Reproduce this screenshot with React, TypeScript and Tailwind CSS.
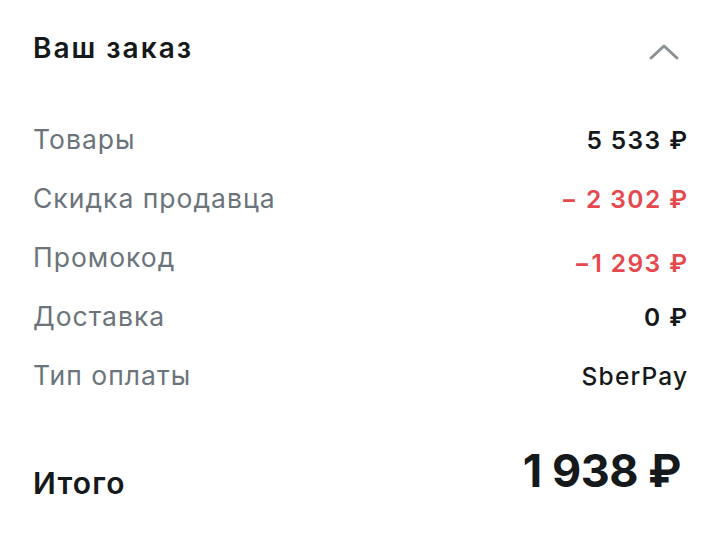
import React from "react";

const rows: { label: string; value: string; red?: boolean; shift?: boolean; medium?: boolean }[] = [
  { label: "Товары", value: "5 533 ₽" },
  { label: "Скидка продавца", value: "− 2 302 ₽", red: true },
  { label: "Промокод", value: "−1 293 ₽", red: true, shift: true },
  { label: "Доставка", value: "0 ₽" },
  { label: "Тип оплаты", value: "SberPay", medium: true },
];

export default function App() {
  return (
    <div
      className="w-[719px] h-[541px] bg-white pl-[33px] pr-[32px] pt-[28px] text-[#16191c]"
      style={{ fontFamily: "Inter, 'Noto Sans', sans-serif" }}
    >
      <div className="flex items-center justify-between h-[40px]">
        <div className="text-[28px] font-semibold tracking-[2px]">Ваш заказ</div>
        <svg width="32" height="18" viewBox="0 0 32 18" className="mr-[7px] mt-[8px]">
          <path d="M3 15 L16 3 L29 15" fill="none" stroke="#8a9298" strokeWidth="3" strokeLinecap="round" strokeLinejoin="round" />
        </svg>
      </div>
      <div className="mt-[52px] flex flex-col">
        {rows.map((r) => (
          <div key={r.label} className="flex items-baseline justify-between h-[59px]">
            <span className="text-[26.5px] text-[#6b747a] tracking-[1px]">{r.label}</span>
            <span
              className={
                (r.red ? "text-[#e5484d] " : "text-[#16191c] ") +
                (r.medium ? "font-medium tracking-[1.2px] " : "font-semibold tracking-[1.4px] ") +
                (r.shift ? "translate-y-[5px] " : "") +
                "text-[24.5px] -mr-[1.4px]"
              }
            >
              {r.value}
            </span>
          </div>
        ))}
      </div>
      <div className="mt-[33px] flex items-baseline justify-between">
        <span className="text-[30px] font-semibold tracking-[1.2px] translate-y-[7px]">Итого</span>
        <span className="text-[45px] font-bold tracking-[-0.5px] leading-none mr-[6px]">1 938 ₽</span>
      </div>
    </div>
  );
}
